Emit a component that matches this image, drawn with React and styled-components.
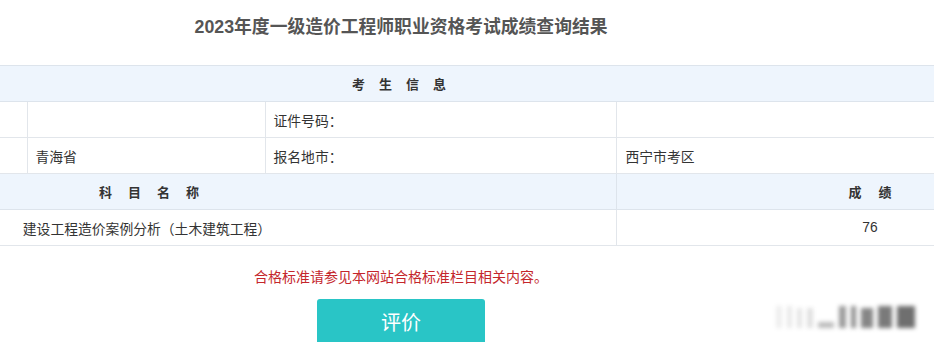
import styled, { createGlobalStyle } from "styled-components";

const GlobalStyle = createGlobalStyle`
    html, body {
        margin: 0;
        padding: 0;
        background: #ffffff;
        overflow: hidden;
    }
    body {
        font-family: "Liberation Sans", "Noto Sans CJK SC", sans-serif;
        color: #333333;
    }
`;

const Viewport = styled.div`
    position: relative;
    width: 934px;
    height: 342px;
    overflow: hidden;
`;

// the page is wider than the window: it is cropped on both sides
const Page = styled.div`
    width: 1446px;
    margin-left: -322px;
    display: flex;
    flex-direction: column;
    align-items: center;
`;

const Title = styled.h1`
    box-sizing: border-box;
    height: 65px;
    margin: 0;
    padding-top: 17px;
    font-size: 17.8px;
    line-height: 20px;
    font-weight: bold;
    color: #555555;
`;

const Table = styled.table`
    width: 100%;
    border-collapse: collapse;
    table-layout: fixed;
    font-size: 13.8px;
`;

const HeadCell = styled.td`
    height: 35px;
    padding: 0 0 0 ${(p) => p.$pad || 0}px;
    background: #eef5fd;
    border: 1px solid #dde4ec;
    font-weight: bold;
    font-size: 13px;
    letter-spacing: ${(p) => p.$spacing}px;
    text-align: ${(p) => p.$align || "center"};
    color: #333333;
    white-space: nowrap;
`;

const Cell = styled.td`
    height: 35px;
    padding: 0 0 0 ${(p) => p.$pad || 0}px;
    border: 1px solid #e2e6eb;
    text-align: ${(p) => p.$align || "left"};
    color: #333333;
    white-space: nowrap;
`;

const Note = styled.p`
    margin: 22px 0 0;
    font-size: 14px;
    line-height: 18px;
    color: #c4262c;
`;

const RateButton = styled.button`
    margin-top: 13px;
    width: 168px;
    height: 48px;
    border: none;
    border-radius: 3px;
    background: #29c5c6;
    color: #ffffff;
    font-family: "Noto Sans CJK SC", sans-serif;
    font-size: 20px;
    padding: 0 0 4px;
    cursor: pointer;
`;

const Watermark = styled.div`
    position: absolute;
    left: 776px;
    top: 306px;
    display: flex;
    align-items: flex-end;
    gap: 5px;
    filter: blur(2px);
`;

const WaterBar = styled.span`
    display: block;
    width: ${(p) => p.$w}px;
    height: ${(p) => p.$h}px;
    background: #222222;
    opacity: ${(p) => p.$o};
`;

const bars = [
    { w: 6, h: 22, o: 0.08 },
    { w: 5, h: 22, o: 0.1 },
    { w: 5, h: 20, o: 0.12 },
    { w: 6, h: 20, o: 0.14 },
    { w: 16, h: 6, o: 0.3 },
    { w: 7, h: 22, o: 0.45 },
    { w: 5, h: 22, o: 0.5 },
    { w: 12, h: 20, o: 0.55 },
    { w: 14, h: 22, o: 0.6 },
    { w: 18, h: 22, o: 0.65 },
];

function App() {
    return (
        <>
            <GlobalStyle />
            <Viewport>
                <Page>
                    <Title>2023年度一级造价工程师职业资格考试成绩查询结果</Title>
                    <Table>
                        <colgroup>
                            <col style={{ width: 349 }} />
                            <col style={{ width: 238 }} />
                            <col style={{ width: 351 }} />
                            <col style={{ width: 508 }} />
                        </colgroup>
                        <tbody>
                            <tr>
                                <HeadCell colSpan={4} $spacing={14} $pad={10}>考生信息</HeadCell>
                            </tr>
                            <tr>
                                <Cell />
                                <Cell $pad={8} />
                                <Cell $pad={8}>证件号码：</Cell>
                                <Cell $pad={9} />
                            </tr>
                            <tr>
                                <Cell />
                                <Cell $pad={8}>青海省</Cell>
                                <Cell $pad={8}>报名地市：</Cell>
                                <Cell $pad={9}>西宁市考区</Cell>
                            </tr>
                            <tr>
                                <HeadCell colSpan={3} $spacing={16} $pad={20}>科目名称</HeadCell>
                                <HeadCell $spacing={17} $align="left" $pad={232}>成绩</HeadCell>
                            </tr>
                            <tr>
                                <Cell colSpan={3} $align="center">建设工程造价案例分析（土木建筑工程）</Cell>
                                <Cell $align="center">76</Cell>
                            </tr>
                        </tbody>
                    </Table>
                    <Note>合格标准请参见本网站合格标准栏目相关内容。</Note>
                    <RateButton>评价</RateButton>
                </Page>
                <Watermark>
                    {bars.map((b, i) => (
                        <WaterBar key={i} $w={b.w} $h={b.h} $o={b.o} />
                    ))}
                </Watermark>
            </Viewport>
        </>
    );
}

export default App;
